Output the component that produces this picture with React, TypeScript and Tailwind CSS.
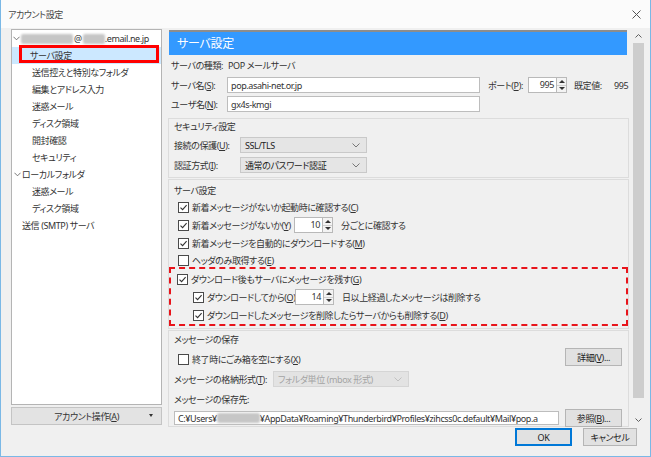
import React from "react";

const Check = ({ checked }: { checked: boolean }) => (
  <span className="w-[11px] h-[11px] border border-[#4a4a4a] bg-white flex items-center justify-center shrink-0">
    {checked && (
      <svg width="9" height="9" viewBox="0 0 9 9">
        <path d="M1.5 4.6 L3.6 6.7 L7.6 2.2" fill="none" stroke="#333" strokeWidth="1.1" />
      </svg>
    )}
  </span>
);

const Spin = ({ value }: { value: string }) => (
  <div className="flex h-[16px] shrink-0">
    <div className="w-[29px] border border-[#b9b9b9] bg-white text-right pr-[2px] leading-[14px]">{value}</div>
    <div className="w-[10px] flex flex-col border border-l-0 border-[#b9b9b9] bg-[#f3f3f3]">
      <div className="flex-1 flex items-center justify-center">
        <span className="w-0 h-0 border-x-[3px] border-x-transparent border-b-[3px] border-b-[#333]" />
      </div>
      <div className="flex-1 flex items-center justify-center border-t border-[#cfcfcf]">
        <span className="w-0 h-0 border-x-[3px] border-x-transparent border-t-[3px] border-t-[#333]" />
      </div>
    </div>
  </div>
);

const Chevron = ({ color = "#777" }: { color?: string }) => (
  <svg width="8" height="5" viewBox="0 0 8 5">
    <path d="M0.5 0.5 L4 4 L7.5 0.5" fill="none" stroke={color} strokeWidth="1" />
  </svg>
);

const Select = ({ text, w, disabled }: { text: string; w: string; disabled?: boolean }) => (
  <div
    className={`${w} h-[16px] flex items-center justify-between pl-[4px] pr-[6px] border shrink-0 ${
      disabled ? "bg-[#e3e3e3] border-[#d5d5d5] text-[#a3a3a3]" : "bg-[#e5e5e5] border-[#c9c9c9] text-[#222]"
    }`}
  >
    <span>{text}</span>
    <Chevron color={disabled ? "#c0c0c0" : "#777"} />
  </div>
);

const Btn = ({ children, w, primary }: { children: React.ReactNode; w: string; primary?: boolean }) => (
  <div
    className={`${w} h-[18px] flex items-center justify-center bg-[#e1e1e1] border ${
      primary ? "border-[#0078d7] shadow-[inset_0_0_0_1px_#0078d7]" : "border-[#b5b5b5]"
    } text-[#222] shrink-0`}
  >
    {children}
  </div>
);

const Blur = ({ w }: { w: string }) => <span className={`inline-block ${w} h-[10px] bg-[#c6c6c6] blur-[1px] rounded-[2px] shrink-0`} />;

const TreeRow = ({ children, pl }: { children: React.ReactNode; pl: string }) => (
  <div className={`h-[17px] flex items-center ${pl}`}>{children}</div>
);

export default function App() {
  return (
    <div className="w-[651px] h-[457px] bg-[#f0f0f0] border-x border-b border-[#7ab8e6] flex flex-col text-[9px] tracking-[-0.4px] text-[#333] [font-family:'Noto_Sans','Noto_Sans_CJK_JP',sans-serif] [font-feature-settings:'palt'_1] whitespace-nowrap leading-none overflow-hidden">
      {/* Title bar */}
      <div className="h-[28px] bg-[#fbfbfb] flex items-center justify-between pl-[7px] pr-[9px] shrink-0">
        <span className="text-[#444]">アカウント設定</span>
        <svg width="9" height="9" viewBox="0 0 9 9">
          <path d="M0.5 0.5 L8.5 8.5 M8.5 0.5 L0.5 8.5" stroke="#555" strokeWidth="1" />
        </svg>
      </div>

      <div className="flex-1 flex pl-[10px] min-h-0">
        {/* Left column */}
        <div className="w-[151px] flex flex-col pt-[1px] shrink-0">
          <div className="h-[376px] border border-[#b4b4b4] bg-white flex flex-col">
            <TreeRow pl="pl-[1px]">
              <span className="w-[7px] mr-[1px] flex items-center"><Chevron color="#666" /></span>
              <Blur w="w-[52px]" />
              <span className="mx-[1px]">@</span>
              <Blur w="w-[22px]" />
              <span>.email.ne.jp</span>
            </TreeRow>
            <div className="relative h-[17px] flex items-center pl-[18px] bg-[#cce8ff]">
              サーバ設定
              <div className="absolute left-[7px] right-[2px] top-[-2px] bottom-[1px] border-[3px] border-[#ff0000]" />
            </div>
            <TreeRow pl="pl-[20px]">送信控えと特別なフォルダ</TreeRow>
            <TreeRow pl="pl-[20px]">編集とアドレス入力</TreeRow>
            <TreeRow pl="pl-[20px]">迷惑メール</TreeRow>
            <TreeRow pl="pl-[20px]">ディスク領域</TreeRow>
            <TreeRow pl="pl-[20px]">開封確認</TreeRow>
            <TreeRow pl="pl-[20px]">セキュリティ</TreeRow>
            <TreeRow pl="pl-[2px]">
              <span className="w-[7px] mr-[1px] flex items-center"><Chevron color="#666" /></span>
              ローカルフォルダ
            </TreeRow>
            <TreeRow pl="pl-[20px]">迷惑メール</TreeRow>
            <TreeRow pl="pl-[20px]">ディスク領域</TreeRow>
            <TreeRow pl="pl-[10px]">送信 (SMTP) サーバ</TreeRow>
          </div>
          <div className="mt-[2px] h-[18px] bg-[#e3e3e3] border border-[#c4c4c4] flex items-center relative">
            <span className="flex-1 text-center">アカウント操作(<u>A</u>)</span>
            <span className="absolute right-[8px] top-[6px] w-0 h-0 border-x-[2px] border-x-transparent border-t-[3px] border-t-[#333]" />
          </div>
        </div>

        {/* Right column */}
        <div className="ml-[4px] flex-1 flex flex-col">
          <div className="h-[399px] flex shrink-0">
            {/* Content */}
            <div className="w-[465px] h-full overflow-hidden flex flex-col shrink-0">
              <div className="mt-[2px] ml-[3px] mr-[4px] h-[25px] shrink-0 bg-[#3399ff] border-t-2 border-[#8d8d8d] flex items-center pl-[8px] text-white text-[12px] tracking-[-0.3px]">
                サーバ設定
              </div>

              <div className="pl-[5px] mt-[3px] h-[14px] flex items-center shrink-0">
                <span className="w-[57px] shrink-0">サーバの種類:</span>
                <span>POP メールサーバ</span>
              </div>
              <div className="pl-[5px] mt-[5px] h-[16px] flex items-center shrink-0">
                <span className="w-[56px] shrink-0">サーバ名(<u>S</u>):</span>
                <div className="w-[253px] h-[16px] border border-[#bdbdbd] bg-white flex items-center pl-[3px] shrink-0">pop.asahi-net.or.jp</div>
                <span className="ml-[8px] w-[40px] shrink-0">ポート(<u>P</u>):</span>
                <Spin value="995" />
                <span className="ml-[7px] w-[40px] shrink-0">既定値:</span>
                <span>995</span>
              </div>
              <div className="pl-[5px] mt-[3px] h-[16px] flex items-center shrink-0">
                <span className="w-[56px] shrink-0">ユーザ名(<u>N</u>):</span>
                <div className="w-[253px] h-[16px] border border-[#bdbdbd] bg-white flex items-center pl-[3px] shrink-0">gx4s-kmgi</div>
              </div>

              {/* Security group */}
              <div className="mt-[6px] mx-[2px] border border-[#dcdcdc] pl-[5px] pb-[4px] shrink-0">
                <div className="h-[14px] flex items-center">セキュリティ設定</div>
                <div className="mt-[4px] flex items-center">
                  <span className="w-[66px] shrink-0">接続の保護(<u>U</u>):</span>
                  <Select text="SSL/TLS" w="w-[127px]" />
                </div>
                <div className="mt-[4px] flex items-center">
                  <span className="w-[66px] shrink-0">認証方式(<u>I</u>):</span>
                  <Select text="通常のパスワード認証" w="w-[127px]" />
                </div>
              </div>

              {/* Server settings group */}
              <div className="mt-[1px] mx-[2px] border border-[#dcdcdc] pb-[2px] shrink-0">
                <div className="pl-[5px] pt-[3px] h-[17px] flex items-center">サーバ設定</div>
                <div className="pl-[9px] mt-[1px] h-[18px] flex items-center gap-[3px]">
                  <Check checked />
                  <span>新着メッセージがないか起動時に確認する(<u>C</u>)</span>
                </div>
                <div className="pl-[9px] h-[18px] flex items-center">
                  <Check checked />
                  <span className="ml-[3px] w-[102px] shrink-0">新着メッセージがないか(<u>Y</u>)</span>
                  <Spin value="10" />
                  <span className="ml-[8px]">分ごとに確認する</span>
                </div>
                <div className="pl-[9px] h-[18px] flex items-center gap-[3px]">
                  <Check checked />
                  <span>新着メッセージを自動的にダウンロードする(<u>M</u>)</span>
                </div>
                <div className="pl-[9px] mt-[1px] h-[14px] flex items-center gap-[3px]">
                  <Check checked={false} />
                  <span>ヘッダのみ取得する(<u>E</u>)</span>
                </div>
                <div className="border-2 border-dashed border-[#e8141b] pt-[1px]">
                  <div className="pl-[6px] h-[18px] flex items-center gap-[3px]">
                    <Check checked />
                    <span>ダウンロード後もサーバにメッセージを残す(<u>G</u>)</span>
                  </div>
                  <div className="pl-[22px] h-[18px] flex items-center">
                    <Check checked />
                    <span className="ml-[3px] w-[88px] shrink-0">ダウンロードしてから(<u>O</u>)</span>
                    <Spin value="14" />
                    <span className="ml-[8px]">日以上経過したメッセージは削除する</span>
                  </div>
                  <div className="pl-[22px] h-[18px] flex items-center gap-[3px]">
                    <Check checked />
                    <span>ダウンロードしたメッセージを削除したらサーバからも削除する(<u>D</u>)</span>
                  </div>
                </div>
              </div>

              {/* Message storage group */}
              <div className="mt-[1px] mx-[2px] border border-[#dcdcdc] pl-[5px] pr-[6px] shrink-0">
                <div className="pt-[1px] h-[15px] flex items-center">メッセージの保存</div>
                <div className="mt-[1px] h-[19px] flex items-end justify-between">
                  <div className="flex items-center gap-[3px] pl-[4px] mb-[1px]">
                    <Check checked={false} />
                    <span>終了時にごみ箱を空にする(<u>X</u>)</span>
                  </div>
                  <Btn w="w-[57px]">詳細(<u>V</u>)...</Btn>
                </div>
                <div className="mt-[5px] flex items-center">
                  <span className="w-[99px] shrink-0">メッセージの格納形式(<u>T</u>):</span>
                  <Select text="フォルダ単位 (mbox 形式)" w="w-[136px]" disabled />
                </div>
                <div className="mt-[5px] h-[14px] flex items-center">メッセージの保存先:</div>
                <div className="mt-[4px] h-[16px] flex items-center">
                  <div className="w-[385px] h-[14px] border border-[#bdbdbd] bg-white flex items-center pl-[3px] overflow-hidden shrink-0">
                    C:¥Users¥<Blur w="w-[43px]" />¥AppData¥Roaming¥Thunderbird¥Profiles¥zihcss0c.default¥Mail¥pop.a
                  </div>
                  <div className="ml-[6px]">
                    <Btn w="w-[57px]">参照(<u>B</u>)...</Btn>
                  </div>
                </div>
              </div>
            </div>

            {/* Scrollbar */}
            <div className="w-[15px] h-full flex flex-col bg-[#f0f0f0] shrink-0">
              <div className="h-[15px] flex items-center justify-center">
                <svg width="7" height="4" viewBox="0 0 7 4">
                  <path d="M0.5 3.5 L3.5 0.5 L6.5 3.5" fill="none" stroke="#606060" strokeWidth="1" />
                </svg>
              </div>
              <div className="mx-[2px] h-[355px] bg-[#cdcdcd]" />
              <div className="flex-1" />
              <div className="h-[15px] flex items-center justify-center">
                <svg width="7" height="4" viewBox="0 0 7 4">
                  <path d="M0.5 0.5 L3.5 3.5 L6.5 0.5" fill="none" stroke="#606060" strokeWidth="1" />
                </svg>
              </div>
            </div>
          </div>

          {/* Dialog buttons */}
          <div className="mt-[1px] flex justify-end gap-[11px] pr-[13px]">
            <Btn w="w-[57px]" primary>OK</Btn>
            <Btn w="w-[54px]">キャンセル</Btn>
          </div>
        </div>
      </div>
    </div>
  );
}
